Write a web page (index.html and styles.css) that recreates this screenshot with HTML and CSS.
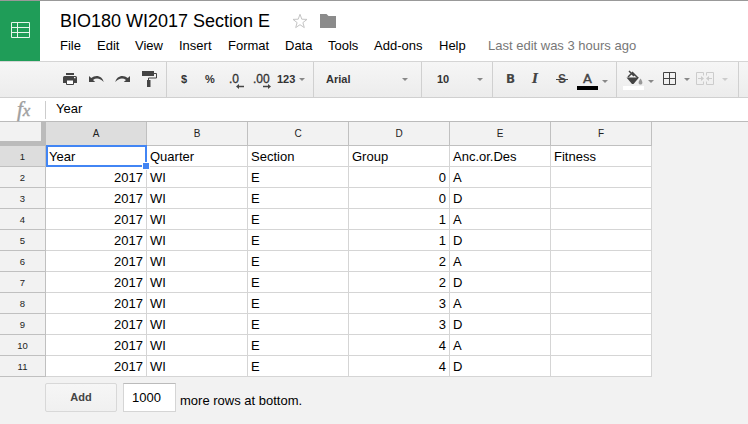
FILE: index.html
```html
<!DOCTYPE html>
<html lang="en">
<head>
<meta charset="utf-8">
<title>BIO180 WI2017 Section E</title>
<link rel="stylesheet" href="styles.css">
</head>
<body>
<header class="header">
  <div class="logo">
    <svg width="20" height="17" viewBox="0 0 20 17" fill="none" stroke="#e6f5ec"><path d="M1.5.5h18v15h-18zM1.5 5.5h18M1.5 10.5h18M7.5.5v15"/></svg>
  </div>
  <div class="heading">
    <div class="title-row">
      <h1 class="title">BIO180 WI2017 Section E</h1>
      <svg class="star" width="16" height="16" viewBox="0 0 16 16" fill="none" stroke="#c4c4c4"><path d="M8 1.300l1.800 4.900 5.200.2-4.100 3.200 1.400 5L8 11.700l-4.300 2.900 1.400-5L1 6.400l5.200-.2z"/></svg>
      <svg class="folder" width="16" height="14" viewBox="0 0 16 14" fill="#8b8b8b"><path d="M0 0h6.500l2 2H16v12H0z"/></svg>
    </div>
    <nav class="menu">
      <span class="m-file">File</span><span class="m-edit">Edit</span><span class="m-view">View</span><span class="m-insert">Insert</span><span class="m-format">Format</span><span class="m-data">Data</span><span class="m-tools">Tools</span><span class="m-addons">Add-ons</span><span class="m-help">Help</span><span class="saved">Last edit was 3 hours ago</span>
    </nav>
  </div>
</header>

<div class="toolbar">
  <div class="group g-edit">
    <svg class="print" width="14" height="14" viewBox="0 0 14 14"><path fill="#444" d="M3 1h8v2H3zM1.500 4h11q1.500 0 1.500 1.500V11h-3V8H3v3H0V5.500Q0 4 1.500 4z"/><path fill="#fff" stroke="#444" d="M3.500 8h7v4.500h-7z"/><path fill="#f2f2f2" d="M11 5h1.500v1.200H11z"/></svg>
    <svg class="undo" width="15" height="9" viewBox="0 0 15 9"><path fill="#444" d="M0 1v6h6.200L4 4.900C7.500 2.500 11.500 3.500 14.700 7 13.500 1 7 -1 2.200 3z"/></svg>
    <svg class="redo" width="15" height="9" viewBox="0 0 15 9"><path fill="#444" d="M15 1v6H8.800L11 4.900C7.500 2.500 3.500 3.500.3 7 1.500 1 8-1 12.800 3z"/></svg>
    <svg class="paint" width="16" height="17" viewBox="0 0 16 17"><path fill="#444" d="M0 0h12v5H0zM5 9h3.500v7H5z"/><path fill="none" stroke="#444" d="M12 2.500h2.500v4.500h-8v3"/></svg>
  </div>
  <div class="group g-number">
    <span class="dollar">$</span><span class="percent">%</span>
    <span class="dec less">.0<svg width="8" height="5" viewBox="0 0 8 5"><path fill="#444" d="M0 2.500L3 0v1.700h5v1.600H3V5z"/></svg></span>
    <span class="dec more">.00<svg width="8" height="5" viewBox="0 0 8 5"><path fill="#444" d="M8 2.500L5 0v1.700H0v1.600h5V5z"/></svg></span>
    <span class="formats">123</span><i class="caret"></i>
  </div>
  <div class="group g-font"><span>Arial</span><i class="caret"></i></div>
  <div class="group g-size"><span>10</span><i class="caret"></i></div>
  <div class="group g-text">
    <span class="bold">B</span><span class="italic">I</span><span class="strike">S</span>
    <span class="swatch ink">A</span><i class="caret low"></i>
  </div>
  <div class="group g-cell">
    <span class="swatch fill"><svg width="18" height="16" viewBox="0 0 18 16"><path fill="none" stroke="#444" stroke-width="1.500" d="M4 1l5 5M3 7L7.500 2.500 13 8"/><path fill="#444" d="M1.500 7.500h12.500L8.500 14h-1.500z"/><path fill="#999" d="M15.500 8.500c3 4 2 6 0 6s-3-2 0-6z"/></svg></span><i class="caret low"></i>
    <svg class="borders" width="13" height="13" viewBox="0 0 13 13"><path fill="none" stroke="#444" d="M.5.5h12v12H.5zM6.500.5v12M.5 6.500h12"/></svg><i class="caret"></i>
    <svg class="merge" width="18" height="13" viewBox="0 0 18 13" fill="none" stroke="#ccc"><path d="M7.500 3.500v-3h-7v12h7v-3M10.500 3.500v-3h7v12h-7v-3M2 6.500h5M16 6.500h-5"/><path fill="#ccc" stroke="none" d="M5 4l3 2.500L5 9zM13 4l-3 2.500L13 9z"/></svg><i class="caret pale"></i>
  </div>
</div>

<div class="formula"><span class="fx">f<span>x</span></span><span class="value">Year</span></div>

<main class="sheet">
  <table class="grid">
    <thead><tr><th class="corner"></th><th class="active">A</th><th>B</th><th>C</th><th>D</th><th>E</th><th>F</th></tr></thead>
    <tbody>
      <tr><th class="active">1</th><td class="selected">Year</td><td>Quarter</td><td>Section</td><td>Group</td><td>Anc.or.Des</td><td>Fitness</td></tr>
      <tr><th>2</th><td class="n">2017</td><td>WI</td><td>E</td><td class="n">0</td><td>A</td><td></td></tr>
      <tr><th>3</th><td class="n">2017</td><td>WI</td><td>E</td><td class="n">0</td><td>D</td><td></td></tr>
      <tr><th>4</th><td class="n">2017</td><td>WI</td><td>E</td><td class="n">1</td><td>A</td><td></td></tr>
      <tr><th>5</th><td class="n">2017</td><td>WI</td><td>E</td><td class="n">1</td><td>D</td><td></td></tr>
      <tr><th>6</th><td class="n">2017</td><td>WI</td><td>E</td><td class="n">2</td><td>A</td><td></td></tr>
      <tr><th>7</th><td class="n">2017</td><td>WI</td><td>E</td><td class="n">2</td><td>D</td><td></td></tr>
      <tr><th>8</th><td class="n">2017</td><td>WI</td><td>E</td><td class="n">3</td><td>A</td><td></td></tr>
      <tr><th>9</th><td class="n">2017</td><td>WI</td><td>E</td><td class="n">3</td><td>D</td><td></td></tr>
      <tr><th>10</th><td class="n">2017</td><td>WI</td><td>E</td><td class="n">4</td><td>A</td><td></td></tr>
      <tr><th>11</th><td class="n">2017</td><td>WI</td><td>E</td><td class="n">4</td><td>D</td><td></td></tr>
    </tbody>
  </table>
  <div class="add-rows"><span class="add">Add</span><span class="count">1000</span><span class="note">more rows at bottom.</span></div>
</main>
</body>
</html>
```
FILE: styles.css
```css
*, *::before, *::after { box-sizing: border-box; }
body {
  margin: 0;
  height: 424px;
  overflow: hidden;
  background: #f2f2f2;
  color: #000;
  font: 13px/15px "Liberation Sans", Arial, sans-serif;
}
svg { display: block; flex: none; }

.header { display: flex; height: 61px; border-top: 1px solid #999; background: #fff; }
.logo { width: 40px; padding: 21px 0 0 10px; background: #1f9d58; }
.heading { padding-left: 20px; }
.title-row { display: flex; height: 37px; }
.title { width: 232px; margin: 8px 0 0; font-size: 18px; line-height: 24px; font-weight: normal; white-space: nowrap; }
.star { margin-top: 12px; }
.folder { margin: 13px 0 0 12px; }
.menu { display: flex; white-space: nowrap; }
.menu span { flex: none; }
.m-file { width: 37px; }
.m-edit { width: 38px; }
.m-view { width: 44px; }
.m-insert { width: 49px; }
.m-format { width: 57px; }
.m-data { width: 43px; }
.m-tools { width: 46px; }
.m-addons { width: 65px; }
.m-help { width: 49px; }
.saved { color: #777; }

.toolbar {
  display: flex;
  height: 37px;
  border-top: 1px solid #d5d5d5;
  border-bottom: 1px solid #d0d0d0;
  background: linear-gradient(#f6f6f6, #ececec);
  color: #333;
  font-size: 11px;
  font-weight: bold;
}
.group { display: flex; flex: none; align-items: flex-start; border-right: 1px solid #d0d0d0; padding-top: 10px; }
.group span { flex: none; }
.g-edit { width: 167px; padding-left: 63px; }
.undo { margin: 3px 0 0 12px; }
.redo { margin: 3px 0 0 11px; }
.paint { margin: -1px 0 0 12px; }
.g-number { width: 147px; padding-left: 14px; }
.dollar { width: 24px; }
.percent { width: 24px; }
.dec { position: relative; font-size: 12px; font-weight: normal; -webkit-text-stroke: 0.3px #333; }
.dec svg { position: absolute; top: 12px; }
.less { width: 24px; }
.less svg { left: 7px; }
.more { width: 24px; }
.more svg { left: 10px; }
.formats { width: 22px; }
.caret { flex: none; width: 6px; height: 3px; margin-top: 6px; background: #888; clip-path: polygon(0 0, 100% 0, 50% 100%); }
.low { margin-top: 8px; }
.pale { background: #ccc; }
.g-font { width: 108px; padding-left: 12px; }
.g-font span { width: 76px; }
.g-size { width: 71px; padding-left: 15px; }
.g-size span { width: 40px; }
.g-text { width: 124px; padding-left: 13px; color: #444; }
.bold { width: 26px; font: bold 12px/14px "DejaVu Sans", sans-serif; }
.italic { width: 24px; font: italic bold 13px/14px "DejaVu Serif", serif; }
.strike { position: relative; width: 12px; margin-right: 9px; font-size: 12px; line-height: 14px; text-align: center; }
.strike::after { content: ""; position: absolute; left: 0; top: 7px; width: 12px; height: 1px; background: #444; }
.swatch { width: 21px; height: 18px; }
.ink { border-bottom: 4px solid #000; text-align: center; font: 13px/13px "DejaVu Sans", sans-serif; -webkit-text-stroke: 0.4px #444; margin-right: 4px; }
.g-cell { width: 122px; padding-left: 6px; }
.fill { border-bottom: 4px solid #fff; margin-right: 4px; }
.fill svg { margin: -2px 0 0 2px; }
.borders { margin: 0 8px 0 9px; }
.merge { margin: 0 8px 0 6px; }

.formula { display: flex; height: 23px; background: #fff; }
.fx { width: 46px; height: 18px; margin-top: 3px; padding-left: 17px; border-right: 1px solid #ccc; color: #a0a0a0; font: italic 21px/16px "Liberation Serif", serif; -webkit-text-stroke: 0.4px #a0a0a0; }
.fx span { font-size: 17px; }
.value { padding: 3px 0 0 10px; }

.sheet { border-top: 1px solid #bbb; }
.grid { width: 652px; table-layout: fixed; border-collapse: separate; border-spacing: 0; background: #fff; }
.grid th, .grid td { height: 21px; padding: 0 3px; border: 0 solid #d5d5d5; border-width: 0 1px 1px 0; line-height: 15px; }
.grid td { padding: 1px 3px 0 3px; white-space: nowrap; }
.grid th { border-color: #c0c0c0; background: #f2f2f2; color: #222; font-size: 9.500px; font-weight: normal; }
.grid thead th { height: 24px; width: 101px; font-size: 10px; }
.grid thead .corner { width: 46px; border: 0 solid #bbb; border-width: 0 5px 5px 0; }
.grid .active { background: #ddd; }
.grid .n { text-align: right; }
.grid .selected { position: relative; }
.selected::before { content: ""; position: absolute; inset: -1px -1px -1px 0; border: 2px solid #4285f4; }
.selected::after { content: ""; position: absolute; right: -4px; bottom: -4px; width: 8px; height: 8px; border: 1px solid #fff; background: #4285f4; z-index: 1; }

.add-rows { display: flex; padding: 6px 0 0 45px; }
.add { width: 72px; height: 29px; border: 1px solid #d8d8d8; border-radius: 2px; background: linear-gradient(#f6f6f6, #f0f0f0); color: #444; font-size: 11px; font-weight: bold; line-height: 27px; text-align: center; }
.count { width: 53px; height: 29px; margin-left: 6px; padding-left: 8px; border: 1px solid #d5d5d5; border-top-color: #bbb; background: #fff; line-height: 27px; }
.note { margin-left: 4px; padding-top: 10px; }
```
